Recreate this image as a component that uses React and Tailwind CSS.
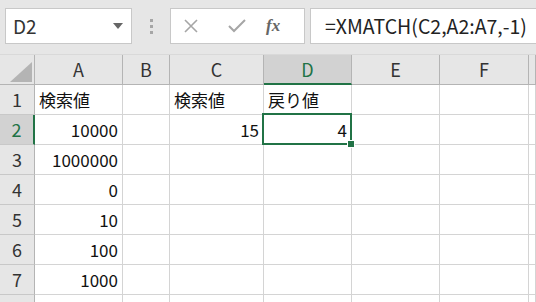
import React from "react";

const F = { fontFamily: '"Noto Sans CJK JP", "Noto Sans", sans-serif' };

const colW = "grid-cols-[35px_88px_47px_94px_88px_88px_89px_1fr]";

const data = [
  ["検索値", "", "検索値", "戻り値"],
  ["10000", "", "15", "4"],
  ["1000000", "", "", ""],
  ["0", "", "", ""],
  ["10", "", "", ""],
  ["100", "", "", ""],
  ["1000", "", "", ""],
];

function Cell({ v, r, c }) {
  const isText = r === 0;
  const selected = r === 1 && c === 3;
  return (
    <div
      className={`relative h-[30px] border-r border-b border-[#d4d4d4] bg-white text-[17px] leading-[29px] text-[#111] overflow-visible ${
        isText ? "text-left pl-[4px]" : "text-right pr-[4px]"
      } ${selected ? "z-10" : ""}`}
    >
      {v}
      {selected && (
        <>
          <div className="absolute left-[-2px] top-[-2px] right-[-1px] bottom-[-1px] border-2 border-[#217346] pointer-events-none" />
          <div className="absolute right-[-4px] bottom-[-4px] w-[6px] h-[6px] bg-[#217346] border border-white box-content" />
        </>
      )}
    </div>
  );
}

export default function App() {
  const headers = ["A", "B", "C", "D", "E", "F", ""];
  return (
    <div className="w-[536px] h-[302px] overflow-hidden bg-white flex flex-col" style={F}>
      {/* formula bar */}
      <div className="h-[55px] bg-[#e6e6e6] flex items-start pt-[8px] pl-[5px] shrink-0 border-b border-[#d9d9d9]">
        <div className="w-[127px] h-[36px] bg-white border border-[#c8c8c8] flex items-center justify-between pl-[7px] pr-[8px]">
          <span className="text-[19px] text-[#333]">D2</span>
          <svg width="10" height="6" viewBox="0 0 10 6">
            <path d="M0 0 H10 L5 6 Z" fill="#666" />
          </svg>
        </div>
        <div className="w-[38px] h-[36px] flex flex-col items-center justify-center gap-[3px]">
          <div className="w-[3px] h-[3px] bg-[#a6a6a6]" />
          <div className="w-[3px] h-[3px] bg-[#a6a6a6]" />
          <div className="w-[3px] h-[3px] bg-[#a6a6a6]" />
        </div>
        <div className="w-[135px] h-[36px] bg-white border border-[#c8c8c8] flex items-center">
          <svg className="ml-[13px]" width="14" height="14" viewBox="0 0 14 14">
            <path d="M1 1 L13 13 M13 1 L1 13" stroke="#a6a6a6" strokeWidth="1.6" />
          </svg>
          <svg className="ml-[30px]" width="18" height="14" viewBox="0 0 18 14">
            <path d="M1 7 L6 12 L17 1" stroke="#a6a6a6" strokeWidth="2" fill="none" />
          </svg>
          <span
            className="ml-[20px] text-[17px] italic text-[#666] font-bold"
            style={{ fontFamily: '"Liberation Serif", serif' }}
          >
            fx
          </span>
        </div>
        <div className="ml-[5px] flex-1 h-[36px] bg-white border border-[#c8c8c8] border-r-0 flex items-center pl-[14px]">
          <span className="text-[19.5px] text-[#222] whitespace-nowrap">=XMATCH(C2,A2:A7,-1)</span>
        </div>
      </div>

      {/* grid */}
      <div className={`grid ${colW}`}>
        {/* header row */}
        <div className="h-[30px] bg-[#e6e6e6] border-r border-b border-[#b4b4b4] relative">
          <svg className="absolute left-[10px] top-[7px]" width="22" height="20" viewBox="0 0 22 20">
            <path d="M22 0 V20 H0 Z" fill="#b4b4b4" />
          </svg>
        </div>
        {headers.map((h, i) => (
          <div
            key={i}
            className={`h-[30px] flex items-center justify-center text-[18px] border-r ${
              h === "D"
                ? "bg-[#d2d2d2] text-[#217346] border-b-2 border-b-[#217346] border-r-[#b4b4b4]"
                : "bg-[#e6e6e6] text-[#333] border-b border-[#b4b4b4]"
            }`}
          >
            {h}
          </div>
        ))}

        {data.map((row, r) => (
          <React.Fragment key={r}>
            <div
              className={`h-[30px] flex items-center justify-center text-[18px] border-b ${
                r === 1
                  ? "bg-[#d2d2d2] text-[#217346] border-r-2 border-r-[#217346] border-b-[#c8c8c8]"
                  : "bg-[#e6e6e6] text-[#333] border-r border-[#b4b4b4] border-b-[#c8c8c8]"
              }`}
            >
              {r + 1}
            </div>
            {[0, 1, 2, 3, 4, 5, 6].map((c) => (
              <Cell key={c} v={row[c] || ""} r={r} c={c} />
            ))}
          </React.Fragment>
        ))}
        {/* row 8 partial */}
        <div className="h-[30px] bg-[#e6e6e6] border-r border-[#b4b4b4]" />
        {[0, 1, 2, 3, 4, 5, 6].map((c) => (
          <div key={c} className="h-[30px] border-r border-[#d4d4d4] bg-white" />
        ))}
      </div>
    </div>
  );
}
